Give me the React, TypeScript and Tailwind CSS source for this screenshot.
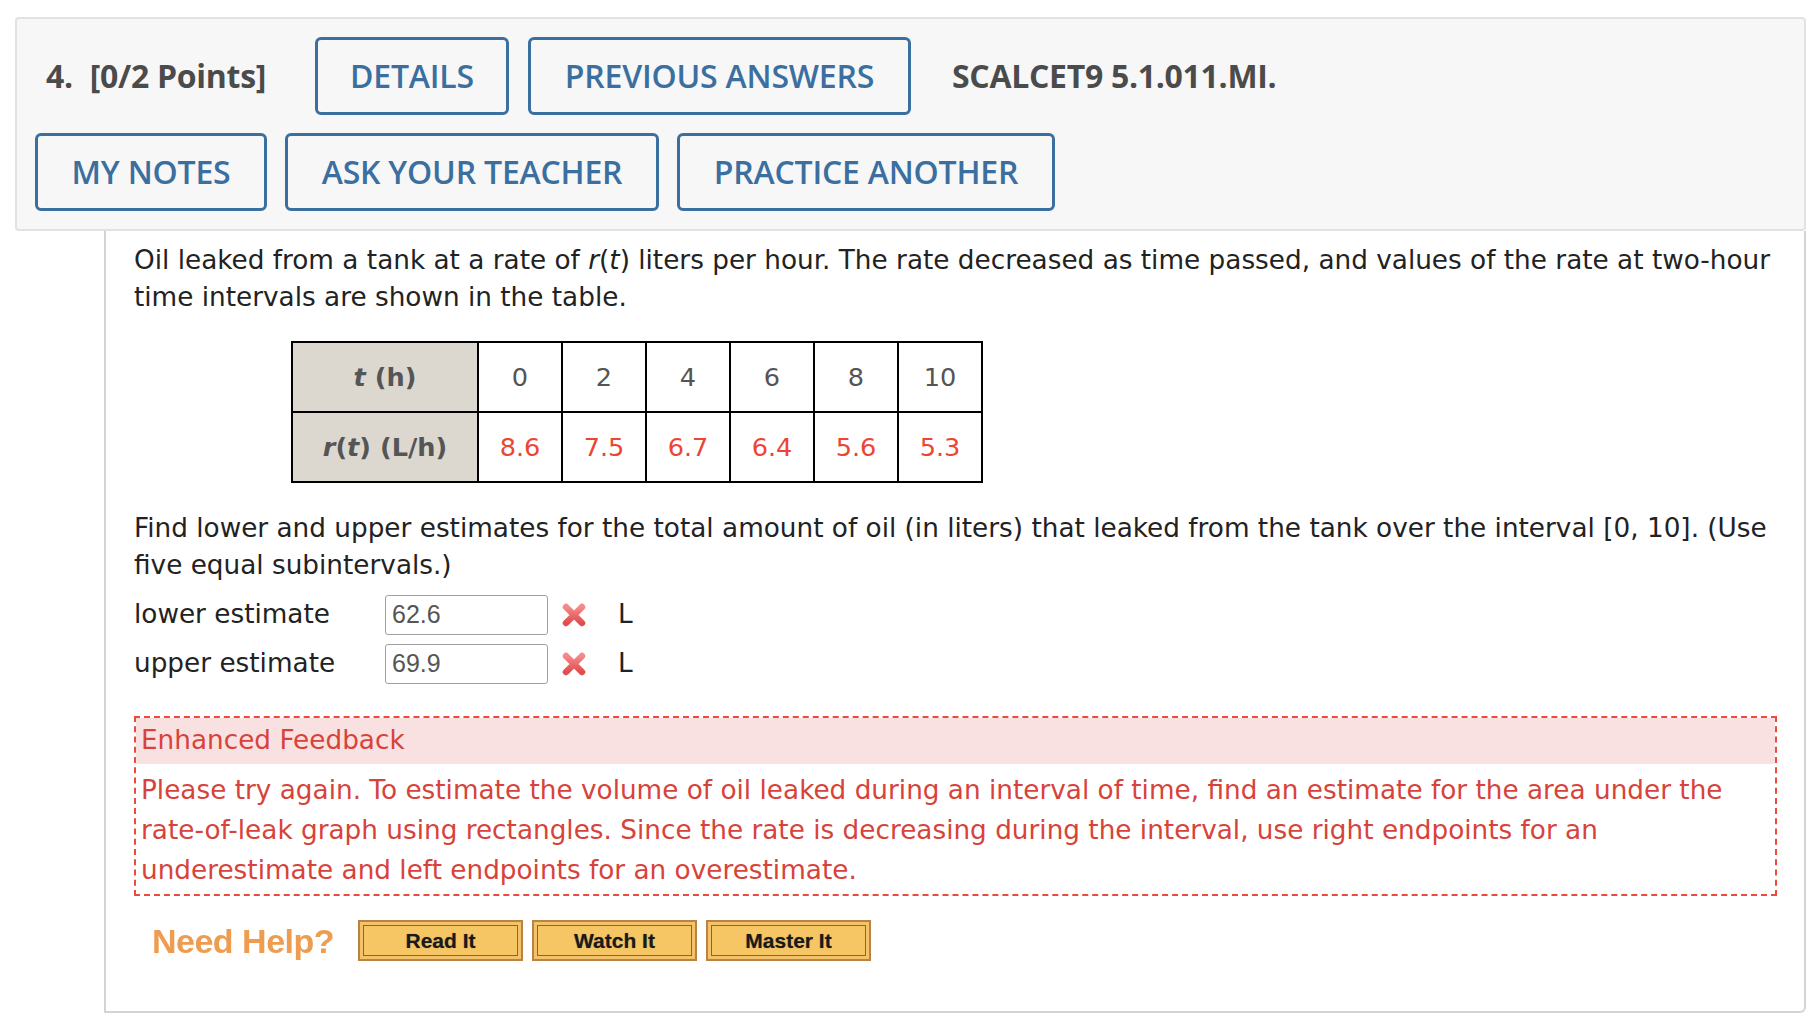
import React from "react";

const openSans = "font-['Open_Sans',sans-serif]";
const verdana = "font-['DejaVu_Sans','Verdana',sans-serif]";

function TopButton({ label, w }: { label: string; w: string }) {
  return (
    <button
      className={`${openSans} ${w} h-[78px] flex items-center justify-center rounded-[6px] border-[3px] border-[#3a6fa0] bg-[#f7f7f7] text-[32px] font-semibold text-[#3a6fa0] tracking-[-0.2px]`}
    >
      {label}
    </button>
  );
}

function WrongMark() {
  return (
    <svg width="26" height="26" viewBox="0 0 26 26" className="blur-[0.4px]">
      <defs>
        <linearGradient id="xg" x1="0" y1="0" x2="0" y2="1">
          <stop offset="0%" stopColor="#f58a8a" />
          <stop offset="100%" stopColor="#e04d4d" />
        </linearGradient>
      </defs>
      <path d="M5 5 L21 21 M21 5 L5 21" stroke="url(#xg)" strokeWidth="6.5" strokeLinecap="round" />
    </svg>
  );
}

function HelpButton({ label }: { label: string }) {
  return (
    <div className="w-[165px] h-[41px] border-2 border-[#b98346] bg-[#f3c36c] p-[3px]">
      <div
        className={`h-full w-full flex items-center justify-center border border-[#8a6637] bg-[#f6c564] font-['Liberation_Sans',Arial,sans-serif] font-bold text-[21px] text-[#1a1a1a] [text-shadow:0_0_1px_rgba(0,0,0,0.4)]`}
      >
        {label}
      </div>
    </div>
  );
}

export default function App() {
  const times = ["0", "2", "4", "6", "8", "10"];
  const rates = ["8.6", "7.5", "6.7", "6.4", "5.6", "5.3"];

  return (
    <div className="min-h-[1020px] w-[1818px] bg-white pl-[15px] pt-[17px]">
      {/* ── Question header ── */}
      <div className="w-[1791px] h-[214px] rounded-[4px] border-2 border-[#e2e2e2] bg-[#f7f7f7] pl-[18px] pt-[18px] flex flex-col gap-[18px]">
        <div className="flex items-center">
          <div className={`${openSans} text-[32px] font-bold text-[#4b4b4b] pl-[11px] w-[280px] tracking-[-0.3px]`}>
            4.<span className="ml-[17px]">[0/2 Points]</span>
          </div>
          <div className="flex gap-[19px]">
            <TopButton label="DETAILS" w="w-[194px]" />
            <TopButton label="PREVIOUS ANSWERS" w="w-[383px]" />
          </div>
          <div className={`${openSans} ml-[41px] text-[32px] font-bold text-[#4b4b4b] tracking-[-0.3px]`}>
            SCALCET9 5.1.011.MI.
          </div>
        </div>
        <div className="flex gap-[18px]">
          <TopButton label="MY NOTES" w="w-[232px]" />
          <TopButton label="ASK YOUR TEACHER" w="w-[374px]" />
          <TopButton label="PRACTICE ANOTHER" w="w-[378px]" />
        </div>
      </div>

      {/* ── Question body ── */}
      <div
        className={`${verdana} ml-[89px] w-[1702px] h-[782px] border-2 border-t-0 border-[#d4d4d4] rounded-br-[6px] pl-[28px] pt-[11px] text-[26.3px] text-[#222]`}
      >
        <p className="leading-[37px] whitespace-nowrap">
          Oil leaked from a tank at a rate of <i>r</i>(<i>t</i>) liters per hour. The rate decreased as time passed, and values of the rate at two-hour
          <br />
          time intervals are shown in the table.
        </p>

        <table className="mt-[25px] ml-[157px] border-collapse border-2 border-black text-[25.6px]">
          <tbody>
            <tr className="h-[70px]">
              <th className="w-[186px] border-2 border-black bg-[#dcd8d0] font-bold text-[#555]">
                <i>t</i> (h)
              </th>
              {times.map((t) => (
                <td key={t} className="w-[84px] border-2 border-black text-center text-[#555]">
                  {t}
                </td>
              ))}
            </tr>
            <tr className="h-[70px]">
              <th className="border-2 border-black bg-[#dcd8d0] font-bold text-[#555]">
                <i>r</i>(<i>t</i>) (L/h)
              </th>
              {rates.map((r) => (
                <td key={r} className="border-2 border-black text-center text-[#ec4534]">
                  {r}
                </td>
              ))}
            </tr>
          </tbody>
        </table>

        <p className="mt-[27px] leading-[37px] whitespace-nowrap">
          Find lower and upper estimates for the total amount of oil (in liters) that leaked from the tank over the interval [0, 10]. (Use
          <br />
          five equal subintervals.)
        </p>

        <div className="mt-[11px] flex flex-col gap-[9px]">
          {[
            ["lower estimate", "62.6"],
            ["upper estimate", "69.9"],
          ].map(([label, val]) => (
            <div key={label} className="flex items-center h-[40px]">
              <span className="w-[251px]">{label}</span>
              <div className="w-[163px] h-[40px] rounded-[3px] border border-[#a0a0a0] bg-white flex items-center pl-[6px] font-['Liberation_Sans',Arial,sans-serif] text-[25px] text-[#555]">
                {val}
              </div>
              <span className="ml-[13px] flex items-center">
                <WrongMark />
              </span>
              <span className="ml-[31px]">L</span>
            </div>
          ))}
        </div>

        {/* Enhanced feedback */}
        <div className="mt-[32px] w-[1643px] border-2 border-dashed border-[#ec4a3c] text-[#d7433a]">
          <div className="h-[46px] bg-[#f9e1e1] pl-[5px] flex items-center">Enhanced Feedback</div>
          <p className="pl-[5px] pt-[6px] pb-[4px] leading-[40px] whitespace-nowrap">
            Please try again. To estimate the volume of oil leaked during an interval of time, find an estimate for the area under the
            <br />
            rate-of-leak graph using rectangles. Since the rate is decreasing during the interval, use right endpoints for an
            <br />
            underestimate and left endpoints for an overestimate.
          </p>
        </div>

        {/* Need help */}
        <div className="mt-[24px] flex items-center">
          <span className="ml-[18px] w-[206px] leading-none font-['Liberation_Sans',Arial,sans-serif] font-bold text-[34px] text-[#ee9c50] blur-[0.3px] tracking-[-0.5px]">
            Need Help?
          </span>
          <div className="flex gap-[9px]">
            <HelpButton label="Read It" />
            <HelpButton label="Watch It" />
            <HelpButton label="Master It" />
          </div>
        </div>
      </div>
    </div>
  );
}
